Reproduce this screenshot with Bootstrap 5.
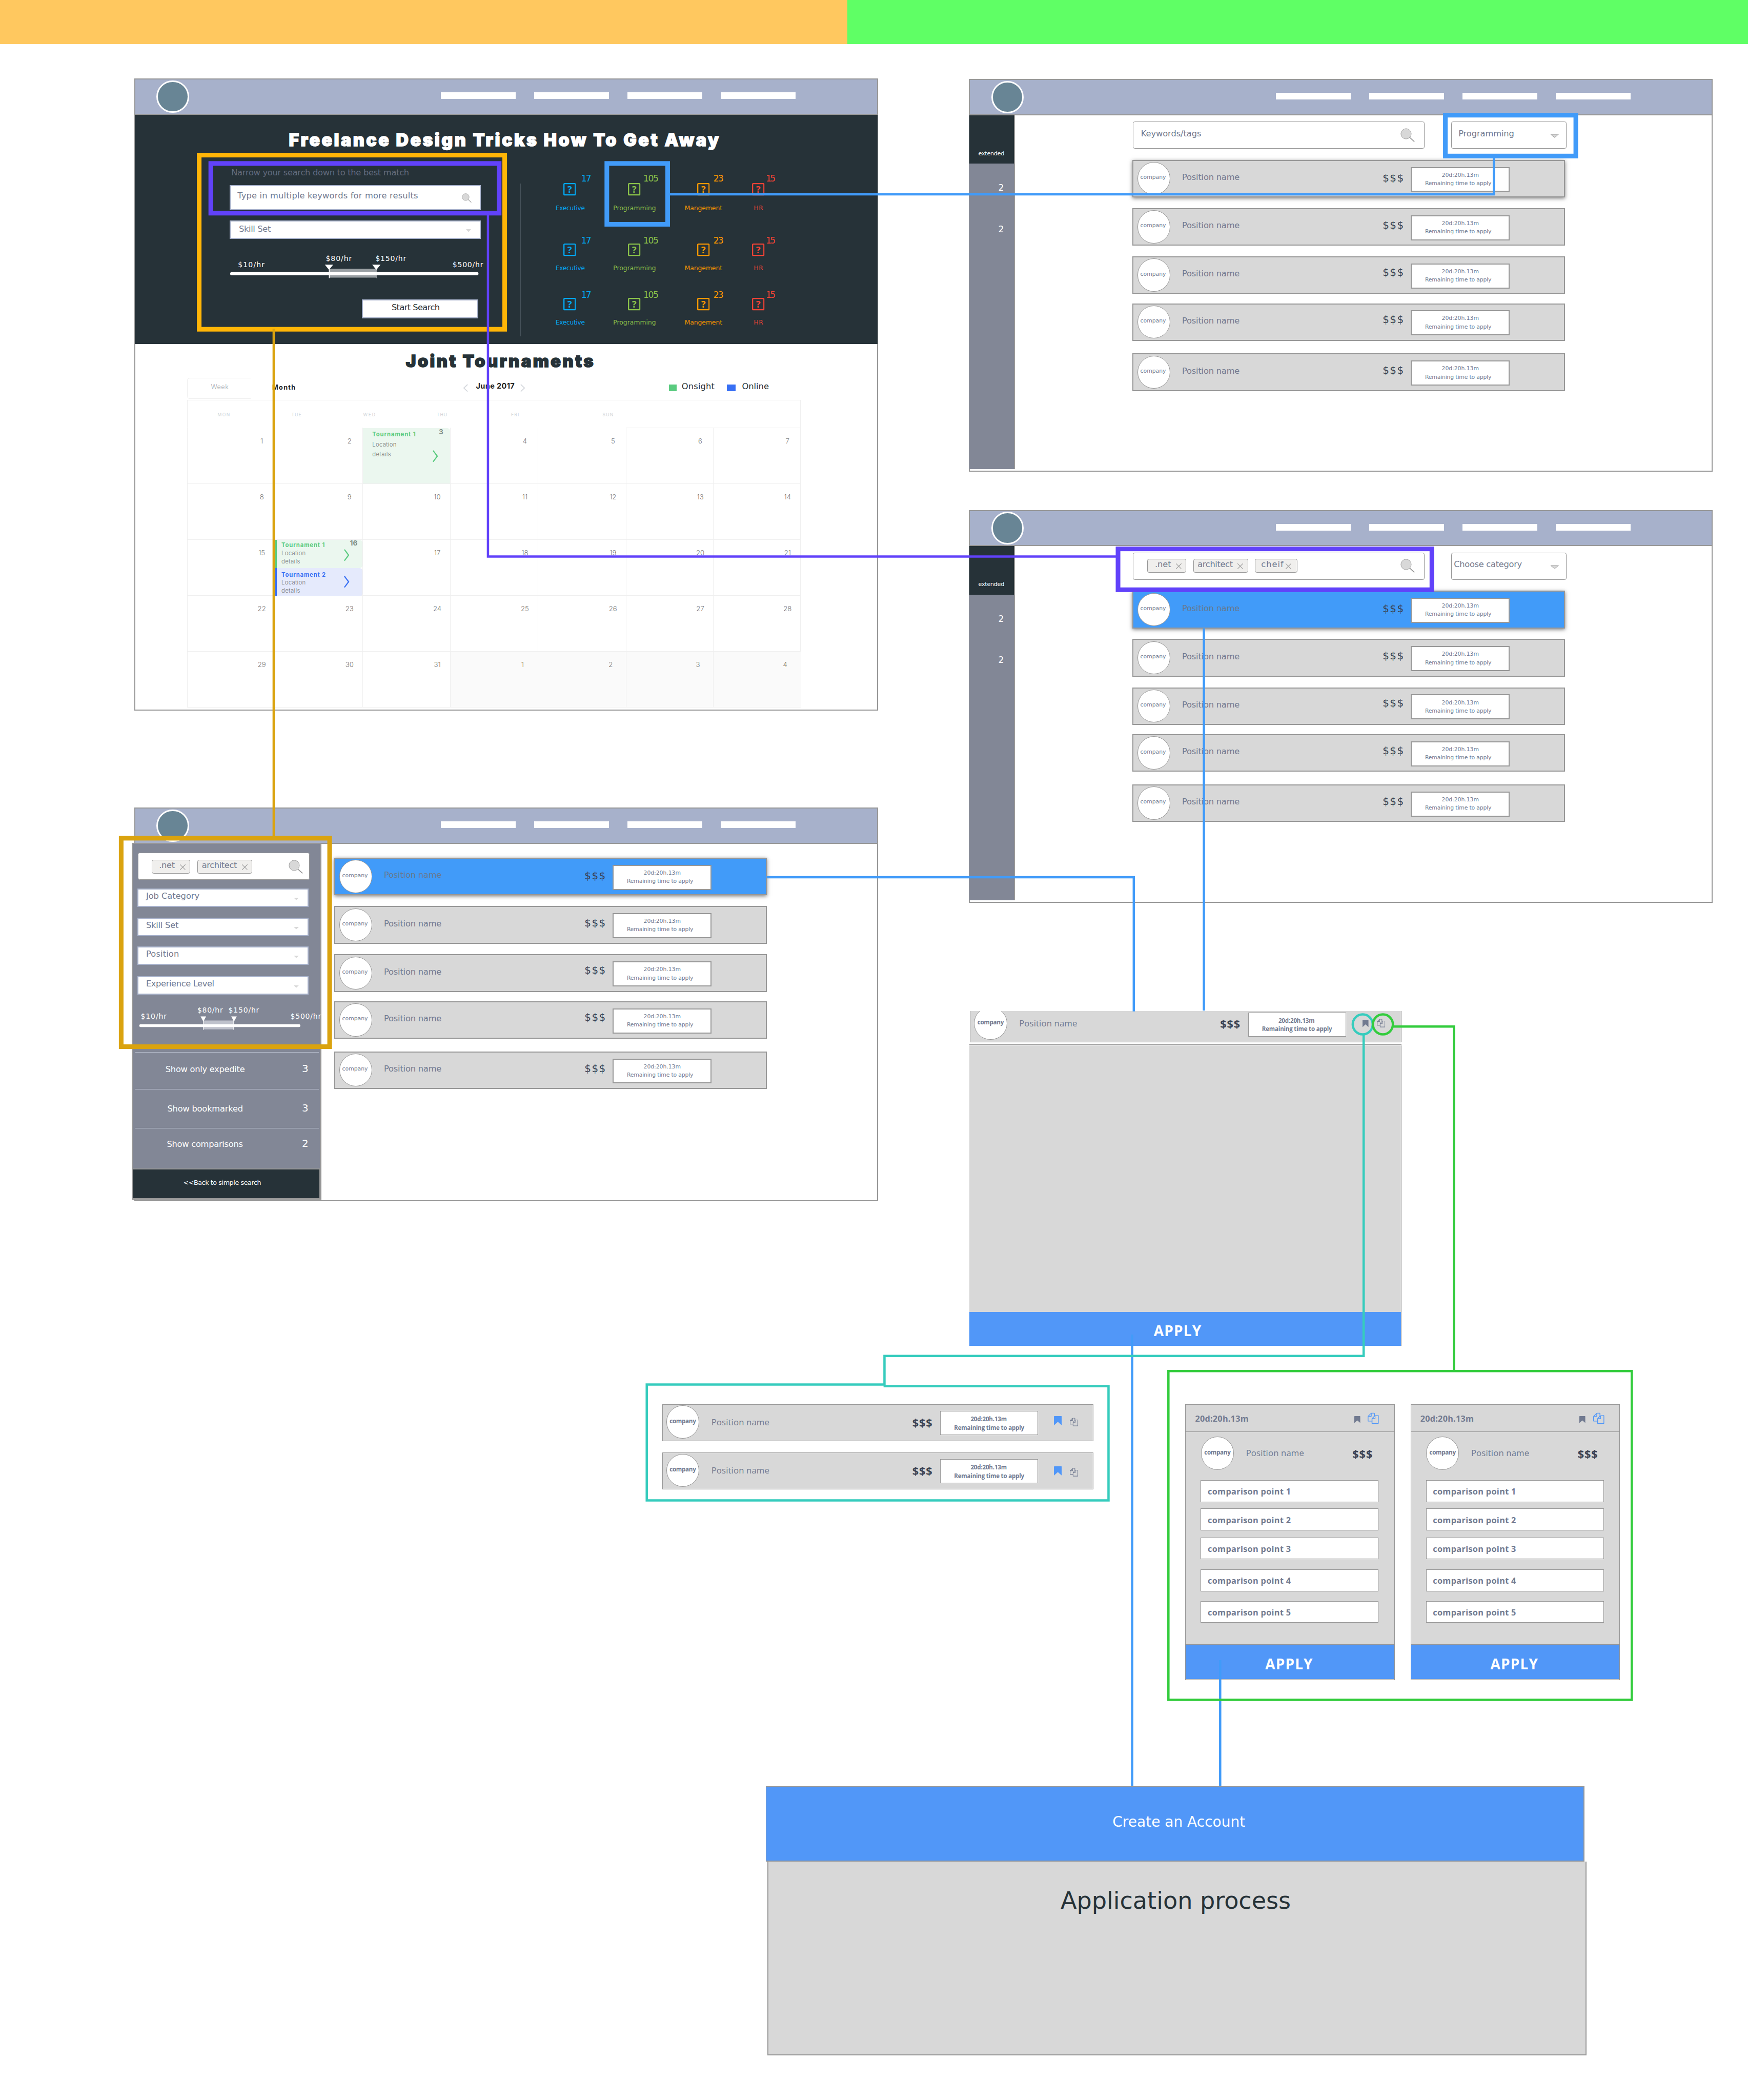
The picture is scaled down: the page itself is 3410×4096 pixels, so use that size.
<!DOCTYPE html>
<html lang="en">
<head>
<meta charset="utf-8">
<title>Job search flow</title>
<link href="https://cdn.jsdelivr.net/npm/bootstrap@5.3.0/dist/css/bootstrap.min.css" rel="stylesheet">
<style>
/* 1rem = 10 board units */
html{font-size:9.0575px}
body{margin:0;background:#fff;font-family:"DejaVu Sans",sans-serif;font-size:1.8rem;line-height:1;color:#717a90}
.board{position:relative;width:376.5rem;height:452.2rem;overflow:hidden}
.node{position:absolute}
.wires{position:absolute;inset:0;width:100%;height:100%;fill:none;pointer-events:none}
.tx{display:inline-block;white-space:nowrap;line-height:1;flex:none;transform:translateY(.13rem)}
.headline,.cal .tx,.os .tx,.cat .tx{transform:none}
svg{display:block;flex:none;overflow:visible}
.strip{height:9.5rem}
.strip-a{width:182.5rem;background:#ffc85f}.strip-b{background:#5fff65}
/* window frame */
.frame{width:160.2rem;border:.23rem solid #979797;background:#fff}
.bar{height:7.6rem;background:#a7b1cb;border-bottom:.23rem solid #979797;padding:.2rem 17.5rem 0 4.6rem}
.logo{width:7rem;height:7rem;border:.34rem solid #fff;border-radius:50%;background:#688595}
.menu{gap:4rem;margin-top:2.6rem}
.menu i{width:16.1rem;height:1.4rem;background:#fff}
/* landing */
.hero{background:#263238;height:49.4rem;margin:0 -.1rem;padding-left:.1rem}
.headline{font:900 3.75rem/1 Inter,sans-serif;color:#fff;-webkit-text-stroke:.17rem currentColor}
.hero .headline{margin:3.5rem 0 0 33.1rem;display:block}
.hero-top{height:8.2rem}
.search-form{width:62.6rem;padding-left:20.3rem;flex:none}
.field{background:#fff;border:.23rem solid #a7b1cb;width:54.1rem}
.hint{color:#636b7d;margin:3.28rem 0 1.82rem .4rem}
.dark-tx{color:#263238}
.rule-v{width:.15rem;height:32.9rem;background:#46525a;margin:6.6rem 0 0 20.3rem}
.cats{margin:5rem 0 0 7.5rem}
.cat{height:7.7rem}
.cat-icon{width:2.7rem;height:2.7rem;margin-top:1.5rem}
.cat-n{font-size:1.9rem}.cat-l{font-size:1.35rem;margin-top:2rem}
.cats>div:nth-child(1) .cat-n{margin-top:-.4rem}
.cats>div:nth-child(2){margin-top:5.3rem}.cats>div:nth-child(3){margin-top:4rem}
.c0{width:12.4rem;color:#03a9f4}.c1{width:15.4rem;color:#8bc34a}.c2{width:14.5rem;color:#ff9800}.c3{width:8rem;color:#f44336}
.c0 .cat-icon{margin-left:1.7rem;margin-right:1.1rem}.c1 .cat-icon{margin-left:3.2rem;margin-right:.6rem}
.c2 .cat-icon{margin-left:2.7rem;margin-right:.8rem}.c3 .cat-icon{margin-right:.3rem}.c3 .cat-l{margin-left:.4rem}
/* calendar */
.cal-title{color:#263238;margin:1.85rem 0 1.7rem 58.3rem;font-size:3.65rem}
.cal{width:132.1rem;margin-left:11.2rem;font-family:Inter,sans-serif;color:#949494}
.cal-bar{height:4.8rem}
.week-btn{width:13.7rem;height:4.6rem;border:.15rem solid #efefef;border-right:0;border-radius:.6rem 0 0 .6rem;padding:1.25rem 0 0 5rem;font-size:1.4rem;color:#a6adb4;font-weight:300}
.cal-days{height:6rem;border:.15rem solid #efefef;border-bottom:0;font-size:.95rem;color:#ced3d8;padding-top:2.7rem}
.cal-grid{display:grid;grid-template-columns:18.86rem 18.9rem 18.9rem 18.87rem 18.98rem 18.8rem 18.79rem;grid-auto-rows:12.02rem;border-right:.15rem solid #efefef;border-bottom:.15rem solid #efefef}
.day{border-left:.15rem solid #efefef;border-top:.15rem solid #efefef;font-size:1.45rem}
.day.top{border-top-color:transparent}.day.out{background:#fafafa}
.day-n{width:5.6rem;margin:2.1rem 0 0 auto;text-align:center;font-weight:300;color:#777}
.day.out .day-n{margin-right:.5rem}
.ev{font-size:1.25rem;position:relative}
.ev-g{background:#ebf7ef}.ev-b{background:#e5eafc}
.ev-s{height:6.08rem;border-left:.4rem solid #5acb7f;padding:.6rem 0 0 1rem;border-radius:0 .6rem .6rem 0}
.ev-s.ev-b{border-color:#376ff4;padding-top:.9rem}
.ev-l{height:100%;padding:.75rem 0 0 2rem;border-radius:0 .6rem 0 0}
.ev .tx{display:block;font-weight:300;color:#777}
.ev-num{position:absolute;font-size:1.5rem;font-weight:700;color:#7f8f87}
.ev-chev{position:absolute}
/* result sheets */
.side{width:9.8rem;height:76.2rem;margin-left:-.1rem;background:#828796;border-right:.23rem solid #979797;color:#fff}
.side-top{height:10.4rem;background:#263238;padding:7.5rem 0 0 1.9rem;font-size:1.25rem}
.side-n{font-size:1.9rem;padding-left:6.2rem}
.inp{height:5.8rem;border:.15rem solid #979797;border-radius:.4rem;background:#fff}
.tagx{height:2.9rem;background:#f0efed;border:.13rem solid #979797;border-radius:.4rem}
.jobs{width:93.1rem}
.job{height:8.1rem;border:.23rem solid #979797;background:#d8d8d8;margin-bottom:2.3rem}
.job:nth-child(3){margin-bottom:2rem}.job:nth-child(4){margin-bottom:2.7rem}
.job:first-child{box-shadow:0 .2rem .8rem rgba(0,0,0,.5)}
.job.hot{background:#419bf9}
.job.hot .job-name{color:#67798f}
.dot{width:7.1rem;height:7.1rem;border:.12rem solid #979797;border-radius:50%;background:#fff;flex:none}
.job .dot{margin:.26rem 0 0 .86rem;padding:2.55rem 0 0 .5rem;font-size:1.2rem}
.job-name{margin:2.58rem 0 0 2.5rem}
.job-pay{font-size:2.2rem;color:#3b4252;margin:2.3rem 1.5rem 0 auto}
.job:nth-child(1) .job-pay{margin-top:2.55rem}.job:nth-child(3) .job-pay{margin-top:2.05rem}.job:nth-child(4) .job-pay{margin-top:2.15rem}
.job-time{width:21.3rem;height:5.4rem;background:#fff;border:.23rem solid #979797;margin:1.3rem 11.7rem 0 0;font-size:1.2rem;padding:.9rem 0 0 2.9rem}
.job-time .tx{display:block}
.job-time .tx:first-child{margin:0 0 .6rem 3.6rem}
/* advanced filter */
.filter{width:40.8rem;height:76.8rem;margin:-.2rem 0 0 -.7rem;background:#828796;border:.23rem solid #979797;border-right-width:.34rem;color:#fff;flex:none}
.filter .field{width:36.8rem;height:4rem;margin-left:1rem;color:#717a90;padding:.42rem 0 0 1.6rem}
.flist{width:39.5rem;margin:3.5rem 0 0 .5rem}
.flist>div{border-top:.15rem solid #b9bfcf}
.back{margin:0 -.1rem 0 -.3rem;height:6.7rem;background:#263238;border:.23rem solid #979797;font-size:1.4rem;padding:2.15rem 0 0 10.9rem}
/* offers */
.os{font-family:"Open Sans",sans-serif}
.offer{width:92.9rem;height:7.9rem;border:.13rem solid #979797;background:#d8d8d8}
.dot-b{font:700 1.3rem/1 "Open Sans",sans-serif;padding:2.6rem 0 0 .6rem}
.offer .dot{margin:.15rem 0 0 .8rem}
.offer-name{font-size:1.85rem;font-weight:400;margin:2.85rem 0 0 2.6rem}
.offer-pay{font-weight:700;font-size:2.4rem;color:#3b4252;margin:2.6rem 1.7rem 0 auto}
.offer-time{width:21.1rem;height:5.2rem;background:#fff;border:.13rem solid #979797;margin-top:1.35rem;font-weight:700;font-size:1.28rem;padding:1rem 0 0 2.9rem}
.offer-time .tx{display:block}.offer-time .tx:first-child{margin:0 0 .55rem 3.55rem}
.offer-act{width:11.8rem}
.clip{height:6.75rem;overflow:hidden;margin-left:.1rem}.clip>.offer{margin-top:-1.15rem}
.apply{background:#5197f8;color:#fff;font:700 3.1rem/1 "Open Sans",sans-serif}
.panel{height:57.4rem;background:#d8d8d8;border-right:.13rem solid #979797}
.cmp{width:45.1rem;height:59.4rem;border:.15rem solid #979797;background:#d8d8d8;font-weight:700}
.cmp-head{height:5.9rem;border-bottom:.15rem solid #979797;padding-left:2rem}
.pt{width:38.3rem;height:4.7rem;background:#fff;border:.13rem solid #979797;margin-left:3.2rem;padding:1.45rem 0 0 1.4rem}
.proc-head{height:16.3rem;background:#5197f8;border:.23rem solid #979797;border-left-width:.12rem;color:#fff;width:176.3rem}
.proc-body{height:41.7rem;width:176.4rem;margin-left:.3rem;background:#d8d8d8;border:.23rem solid #979797;border-top:0;color:#263238}
</style>
<script src="https://cdn.jsdelivr.net/npm/bootstrap@5.3.0/dist/js/bootstrap.bundle.min.js"></script>
</head>
<body>
<svg width="0" height="0" class="position-absolute">
  <symbol id="copy" viewBox="0 0 1792 1792"><path fill="currentColor" d="M1696 384q40 0 68 28t28 68v1216q0 40-28 68t-68 28H736q-40 0-68-28t-28-68v-288H96q-40 0-68-28t-28-68V672q0-40 20-88t48-76L476 100q28-28 76-48t88-20h416q40 0 68 28t28 68v328q68-40 128-40h416zm-544 213L853 896h299V597zM512 213L213 512h299V213zm196 647l316-316V128H640v416q0 40-28 68t-68 28H128v640h512v-256q0-40 20-88t48-76zm956 804V512h-416v416q0 40-28 68t-68 28H768v640h896z"/></symbol>
  <symbol id="mark-i" viewBox="0 0 13 16" preserveAspectRatio="none"><path fill="currentColor" d="M1 0h11q1 0 1 1v15l-6.500-6L0 16V1q0-1 1-1z"/></symbol>
  <symbol id="glass" viewBox="0 0 32 32"><path d="M20 20L31 30" stroke="#979797" stroke-width="2" fill="none"/><circle cx="12.500" cy="12.500" r="11.500" fill="#d8d8d8" stroke="#979797"/></symbol>
  <symbol id="ask" viewBox="0 0 27 27"><rect x="1.300" y="1.300" width="24.400" height="24.400" rx="1.500" fill="none" stroke="currentColor" stroke-width="2.600"/><text x="13.500" y="20.800" text-anchor="middle" font-family="Open Sans, sans-serif" font-weight="700" font-size="20" fill="currentColor">?</text></symbol>
  <symbol id="ex" viewBox="0 0 12 12"><path d="M0 0L12 12M12 0L0 12" stroke="#979797" stroke-width="1.200"/></symbol>
</svg>

<main class="board">
  <div class="d-flex"><div class="strip strip-a"></div><div class="strip strip-b flex-grow-1"></div></div>

  <!-- Landing page -->
  <section class="node frame" style="left:28.9rem;top:16.9rem;height:136.1rem">
    <header class="bar d-flex justify-content-between"></header>
    <div class="hero">
      <div class="hero-top d-flex"><h1 class="tx headline" data-w="926">Freelance Design Tricks How To Get Away</h1></div>
      <div class="d-flex">
        <div class="search-form d-flex flex-column align-items-start">
          <label class="tx hint" data-w="383">Narrow your search down to the best match</label>
          <div class="field d-flex" style="height:5.4rem">
            <span class="tx" style="margin:1.18rem 0 0 1.5rem" data-w="389">Type in multiple keywords for more results</span>
            <svg class="ms-auto" style="width:2.1rem;height:2.1rem;margin:1.6rem 1.7rem 0 0"><use href="#glass"/></svg>
          </div>
          <div class="field d-flex" style="height:3.9rem;margin-top:2.3rem">
            <span class="tx" style="margin:.58rem 0 0 1.8rem" data-w="69">Skill Set</span>
            <svg class="ms-auto" style="width:1.1rem;height:.6rem;margin:1.6rem 1.8rem 0 0" viewBox="0 0 11 6"><path d="M0 0H11L5.500 6Z" fill="#d8d8d8"/></svg>
          </div>
          <svg style="width:56rem;height:7rem;margin-top:2.6rem" viewBox="494 540 560 70" font-size="15.500" fill="#fff">
            <text x="512" y="575" textLength="57">$10/hr</text><text x="701" y="562" textLength="56">$80/hr</text>
            <text x="808" y="562" textLength="66">$150/hr</text><text x="974" y="575" textLength="66">$500/hr</text>
            <path d="M708 579H810V598H708Z" fill="#9aa0a4"/><rect x="495" y="586" width="535" height="7" rx="3.500"/>
            <path d="M699 570H717L708 581ZM801 570H819L810 581Z"/><path d="M708.500 575V599M809.500 575V599" stroke="#fff" stroke-width="1.500"/>
          </svg>
          <div class="field d-flex dark-tx" style="width:25.1rem;height:4rem;margin:3.5rem 0 0 28.5rem"><span class="tx" style="margin:.48rem 0 0 6.2rem" data-w="104">Start Search</span></div>
        </div>
        <div class="rule-v"></div>
        <div class="cats" id="cats"></div>
      </div>
    </div>
    <h2 class="tx headline cal-title" data-w="404">Joint Tournaments</h2>
    <div class="cal">
      <div class="cal-bar d-flex">
        <div class="week-btn"><span class="tx" data-w="38">Week</span></div>
        <span class="tx" style="font-size:1.4rem;font-weight:700;color:#1c1c1c;margin:1.5rem 0 0 4.6rem" data-w="50">Month</span>
        <svg style="width:1rem;height:1.5rem;margin:1.5rem 0 0 36.2rem" viewBox="0 0 10 15"><path d="M9 0L1 7.500L9 15" fill="none" stroke="#d5d8dd" stroke-width="2"/></svg>
        <span class="tx" style="font-size:1.6rem;font-weight:700;color:#1c1c1c;margin:1.1rem 0 0 1.7rem" data-w="83">June 2017</span>
        <svg style="width:1rem;height:1.5rem;margin:1.5rem 0 0 1.2rem" viewBox="0 0 10 15"><path d="M1 0L9 7.500L1 15" fill="none" stroke="#d5d8dd" stroke-width="2"/></svg>
        <div style="width:1.6rem;height:1.4rem;background:#5acb7f;margin:1.5rem 0 0 31.1rem"></div>
        <span class="tx dark-tx" style="font-family:'DejaVu Sans';margin:1.08rem 0 0 1.1rem;font-size:1.8rem" data-w="71">Onsight</span>
        <div style="width:1.8rem;height:1.4rem;background:#376ff4;margin:1.5rem 0 0 2.7rem"></div>
        <span class="tx dark-tx" style="font-family:'DejaVu Sans';margin:1.08rem 0 0 1.4rem;font-size:1.8rem" data-w="58">Online</span>
      </div>
      <div class="cal-days d-flex" id="days"></div>
      <div class="cal-grid" id="grid"></div>
    </div>
  </section>

  <!-- Simple search, by category -->
  <section class="node frame" style="left:208.7rem;top:17rem;height:84.6rem">
    <header class="bar d-flex justify-content-between"></header>
    <div class="d-flex">
      <aside class="side"></aside>
      <div style="margin:1.4rem 0 0 25.3rem">
        <div class="d-flex" style="margin-left:.1rem">
          <div class="inp d-flex" style="width:62.8rem"><span class="tx" style="margin:1.45rem 0 0 1.6rem" data-w="130">Keywords/tags</span>
            <svg class="ms-auto" style="width:3.1rem;height:3.1rem;margin:1.25rem 2rem 0 0"><use href="#glass"/></svg></div>
          <div class="inp d-flex" style="width:24.9rem;margin-left:5.7rem"><span class="tx" style="margin:1.45rem 0 0 1.5rem" data-w="120">Programming</span>
            <svg class="ms-auto" style="width:1.7rem;height:.7rem;margin:2.6rem 1.6rem 0 0" viewBox="0 0 17 7"><path d="M0 0H17L8.500 7Z" fill="#d8d8d8" stroke="#979797"/></svg></div>
        </div>
        <div class="jobs" style="margin-top:2.4rem"></div>
      </div>
    </div>
  </section>

  <!-- Simple search, by keywords -->
  <section class="node frame" style="left:208.7rem;top:109.8rem;height:84.6rem">
    <header class="bar d-flex justify-content-between"></header>
    <div class="d-flex">
      <aside class="side"></aside>
      <div style="margin:1.4rem 0 0 25.3rem">
        <div class="d-flex" style="margin-left:.1rem">
          <div class="inp d-flex" style="width:62.8rem">
            <div class="tagx d-flex" style="width:8.3rem;margin:1.25rem 0 0 3rem"><span class="tx" style="margin:.1rem 0 0 1.5rem" data-w="35">.net</span><svg style="width:1.2rem;height:1.2rem;margin:.9rem 0 0 1rem"><use href="#ex"/></svg></div>
            <div class="tagx d-flex" style="width:11.8rem;margin:1.25rem 0 0 1.6rem"><span class="tx" style="margin:.1rem 0 0 .8rem" data-w="76">architect</span><svg style="width:1.2rem;height:1.2rem;margin:.9rem 0 0 1rem"><use href="#ex"/></svg></div>
            <div class="tagx d-flex" style="width:9.1rem;margin:1.25rem 0 0 1.5rem"><span class="tx" style="margin:.1rem 0 0 1.2rem" data-w="48">cheif</span><svg style="width:1.2rem;height:1.2rem;margin:.9rem 0 0 .5rem"><use href="#ex"/></svg></div>
            <svg class="ms-auto" style="width:3.1rem;height:3.1rem;margin:1.25rem 2rem 0 0"><use href="#glass"/></svg></div>
          <div class="inp d-flex" style="width:24.9rem;margin-left:5.7rem"><span class="tx" style="margin:1.45rem 0 0 .5rem" data-w="147">Choose category</span>
            <svg class="ms-auto" style="width:1.7rem;height:.7rem;margin:2.6rem 1.6rem 0 0" viewBox="0 0 17 7"><path d="M0 0H17L8.500 7Z" fill="#d8d8d8" stroke="#979797"/></svg></div>
        </div>
        <div class="jobs" data-hot="1" style="margin-top:2.4rem"></div>
      </div>
    </div>
  </section>

  <!-- Advanced search -->
  <section class="node frame" style="left:28.9rem;top:173.9rem;height:84.8rem">
    <header class="bar d-flex justify-content-between"></header>
    <div class="d-flex">
      <aside class="filter">
        <div class="inp d-flex" style="width:36.9rem;margin:1.9rem 0 0 1.1rem;color:#717a90">
          <div class="tagx d-flex" style="width:8.3rem;margin:1.45rem 0 0 2.8rem"><span class="tx" style="margin:.1rem 0 0 1.5rem" data-w="34">.net</span><svg style="width:1.2rem;height:1.2rem;margin:.8rem 0 0 1.1rem"><use href="#ex"/></svg></div>
          <div class="tagx d-flex" style="width:11.8rem;margin:1.45rem 0 0 1.6rem"><span class="tx" style="margin:.1rem 0 0 .8rem" data-w="76">architect</span><svg style="width:1.2rem;height:1.2rem;margin:.8rem 0 0 1.1rem"><use href="#ex"/></svg></div>
          <svg class="ms-auto" style="width:3.1rem;height:3.1rem;margin:1.35rem 1.3rem 0 0"><use href="#glass"/></svg>
        </div>
        <div id="selects"></div>
        <svg style="width:41rem;height:8rem;margin-top:.8rem" viewBox="286 2150 410 80" font-size="15.500" fill="#fff">
          <text x="303" y="2193" textLength="56">$10/hr</text><text x="425" y="2180" textLength="55">$80/hr</text>
          <text x="492" y="2180" textLength="66">$150/hr</text><text x="625.500" y="2193" textLength="66">$500/hr</text>
          <path d="M438 2197H504V2216H438Z" fill="#bfc2cc"/><rect x="300" y="2205" width="347" height="6" rx="3"/>
          <path d="M432 2188H444L438 2199ZM498 2188H510L504 2199Z"/><path d="M438.500 2192V2217M503.500 2192V2217" stroke="#fff" stroke-width="1.300"/>
        </svg>
        <div class="flist">
          <div class="d-flex align-items-baseline" style="height:8rem;padding-top:2.3rem"><span class="tx" style="margin-left:6.5rem" data-w="171">Show only expedite</span><span class="tx ms-auto" style="font-size:2.2rem;margin-right:2.2rem">3</span></div>
          <div class="d-flex align-items-baseline" style="height:8.35rem;padding-top:2.8rem"><span class="tx" style="margin-left:6.9rem" data-w="163">Show bookmarked</span><span class="tx ms-auto" style="font-size:2.2rem;margin-right:2.2rem">3</span></div>
          <div class="d-flex align-items-baseline" style="height:8.7rem;padding-top:2.1rem"><span class="tx" style="margin-left:6.8rem" data-w="164">Show comparisons</span><span class="tx ms-auto" style="font-size:2.2rem;margin-right:2.2rem">2</span></div>
        </div>
        <div class="back"><span class="tx" data-w="168">&lt;&lt;Back to simple search</span></div>
      </aside>
      <div class="jobs" data-hot="1" style="margin:3rem 0 0 2.8rem"></div>
    </div>
  </section>

  <!-- Position details -->
  <section class="node os" style="left:208.8rem;top:217.7rem;width:93rem">
    <div class="clip" id="detail"></div>
    <div style="height:.2rem;background:#979797;margin:.4rem 0 .1rem"></div>
    <div class="panel"></div>
    <div class="apply" style="height:7.3rem;padding:2.4rem 0 0 39.7rem;border-right:.13rem solid #979797"><span class="tx" data-w="102">APPLY</span></div>
  </section>

  <!-- Bookmarked -->
  <section class="node os d-flex flex-column" style="left:142.6rem;top:302.4rem;gap:2.5rem" id="marked"></section>

  <!-- Comparison -->
  <section class="node os d-flex" style="left:255.3rem;top:302.4rem;gap:3.4rem" id="compare"></section>

  <!-- Application process -->
  <section class="node" style="left:165rem;top:384.6rem">
    <div class="proc-head"><span class="tx" style="font-size:3.1rem;margin:5.9rem 0 0 74.5rem" data-w="286">Create an Account</span></div>
    <div class="proc-body"><span class="tx" style="font-size:5.1rem;margin:5.7rem 0 0 62.900rem" data-w="496">Application process</span></div>
  </section>

  <!-- Highlights and flow lines -->
  <svg class="wires" viewBox="0 0 3765 4522" preserveAspectRatio="none">
    <g stroke-width="10">
      <rect x="429" y="334" width="658" height="375" stroke="#ffb507"/>
      <rect x="454" y="352" width="621" height="107" stroke="#6142fa"/>
      <rect x="1307" y="352" width="131" height="131" stroke="#419bf9"/>
      <rect x="3113" y="248" width="281" height="88" stroke="#419bf9"/>
      <rect x="2408" y="1182" width="676" height="88" stroke="#6142fa"/>
      <rect x="261" y="1805" width="449" height="449" stroke="#daa30f"/>
    </g>
    <g stroke-width="5">
      <path d="M589.500 708V1803" stroke="#daa30f"/>
      <path d="M1051 462V1198.500H2405" stroke="#6142fa"/>
      <g stroke="#419bf9">
        <path d="M1441 418.500H3217.500V339"/><path d="M2593 1353V2176"/><path d="M1651 1889H2442V2178"/>
        <path d="M2438.500 2874V3846"/><path d="M2628 3575V3846"/>
      </g>
      <g stroke="#36ccbd"><circle cx="2935" cy="2206" r="21.500"/><path d="M2937 2228V2920H1905V2981.500H1393V3231H2387.500V2985H1903"/></g>
      <g stroke="#33cc3d"><circle cx="2978.500" cy="2206" r="21.500"/><path d="M3001 2210.500H3131.500V2952"/><rect x="2516.500" y="2952.500" width="998" height="708"/></g>
    </g>
  </svg>
</main>

<script>
const $ = s => document.querySelector(s), all = s => [...document.querySelectorAll(s)];
const t = (w, s, c = '') => `<span class="tx ${c}" data-w="${w}">${s}</span>`;
const icon = (id, w, h, css) => `<svg style="width:${w}rem;height:${h}rem;${css}"><use href="#${id}"/></svg>`;

all('.bar').forEach(b => b.innerHTML = '<div class="logo"></div><div class="menu d-flex"><i></i><i></i><i></i><i></i></div>');

const cats = [['17', 22, 'Executive', 63], ['105', 33, 'Programming', 92], ['23', 22, 'Mangement', 81], ['15', 21, 'HR', 20]];
$('#cats').innerHTML = [0, 1, 2].map(() => '<div class="d-flex">' + cats.map((c, i) =>
  `<div class="cat c${i}"><div class="d-flex"><svg class="cat-icon"><use href="#ask"/></svg>${t(c[1], c[0], 'cat-n')}</div>${t(c[3], c[2], 'cat-l')}</div>`).join('') + '</div>').join('');

/* weekday labels: text, width, gap before it */
$('#days').innerHTML = [['MON', 26, 6.45], ['TUE', 21, 13.3], ['WED', 26, 13.35], ['THU', 22, 13.25], ['FRI', 17, 13.8], ['SUN', 23, 18]]
  .map(d => `<div style="margin-left:${d[2]}rem">${t(d[1], d[0])}</div>`).join('');

const chev = (c, x, y) => `<svg class="ev-chev" style="left:${x}rem;top:${y}rem;width:1.100rem;height:2.600rem" viewBox="0 0 11 26"><path d="M1 1L10 13L1 25" fill="none" stroke="${c}" stroke-width="2.500"/></svg>`;
let cells = '';
for (let i = 0; i < 35; i++) {
  const n = i < 31 ? i + 1 : i - 30;
  const cls = (i < 5 ? ' top' : '') + (i > 30 ? ' out' : '');
  let body = `<div class="day-n">${n}</div>`;
  if (n === 3 && i < 31) body = `<div class="ev ev-g ev-l"><b class="tx" data-w="93" style="font-weight:700;color:#5acb7f">Tournament 1</b>
    <span class="tx" data-w="52" style="margin-top:.95rem">Location</span><span class="tx" data-w="40" style="margin-top:.85rem">details</span>
    <span class="ev-num" style="right:1.5rem;top:.1rem">3</span>${chev('#5acb7f', 15, 4.7)}</div>`;
  if (n === 16) body = `<div class="ev ev-g ev-s"><b class="tx" data-w="93" style="font-weight:700;color:#5acb7f">Tournament 1</b>
    <span class="tx" data-w="52" style="margin-top:.5rem">Location</span><span class="tx" data-w="40" style="margin-top:.5rem">details</span>
    <span class="ev-num" style="right:1.1rem;top:0">16</span>${chev('#5acb7f', 14.500, 2)}</div>
    <div class="ev ev-b ev-s"><b class="tx" data-w="95" style="font-weight:700;color:#376ff4">Tournament 2</b>
    <span class="tx" data-w="52" style="margin-top:.42rem">Location</span><span class="tx" data-w="40" style="margin-top:.42rem">details</span>${chev('#376ff4', 14.500, 1.6)}</div>`;
  cells += `<div class="day${cls}">${body}</div>`;
}
$('#grid').innerHTML = cells;

all('.side').forEach(s => s.innerHTML = `<div class="side-top">${t(56, 'extended')}</div><div class="side-n" style="margin-top:4.250rem"><span class="tx">2</span></div><div class="side-n" style="margin-top:6.950rem"><span class="tx">2</span></div>`);

all('.jobs').forEach(list => list.innerHTML = [0, 1, 2, 3, 4].map(i =>
  `<article class="job d-flex align-items-start${i === 0 && list.dataset.hot ? ' hot' : ''}"><div class="dot">${t(55, 'company')}</div>${t(124, 'Position name', 'job-name')}${t(45, '$$$', 'job-pay')}
   <div class="job-time">${t(80, '20d:20h.13m')}${t(143, 'Remaining time to apply')}</div></article>`).join(''));

$('#selects').innerHTML = [['Job Category', 115, 1.9], ['Skill Set', 70, 2.3], ['Position', 71, 2.2], ['Experience Level', 147, 2.4]].map(s =>
  `<div class="field d-flex align-items-start" style="margin-top:${s[2]}rem">${t(s[1], s[0])}<svg class="ms-auto" style="width:1.100rem;height:.5rem;margin:1.300rem 1.900rem 0 0" viewBox="0 0 11 5"><path d="M0 0H11L5.500 5Z" fill="#d8d8d8"/></svg></div>`).join('');

const offer = acts => `<article class="offer d-flex align-items-start"><div class="dot dot-b">${t(57, 'company')}</div>${t(125, 'Position name', 'offer-name')}${t(43, '$$$', 'offer-pay')}
  <div class="offer-time">${t(78, '20d:20h.13m')}${t(151, 'Remaining time to apply')}</div><div class="offer-act d-flex align-items-start">${acts}</div></article>`;
$('#detail').innerHTML = offer(icon('mark-i', 1.3, 1.6, 'margin:2.900rem 0 0 3.600rem') + icon('copy', 1.8, 1.9, 'margin:2.700rem 0 0 1.800rem'));
$('#marked').innerHTML = [2.45, 2.85].map(y => offer(icon('mark-i', 1.7, 2, `margin:${y}rem 0 0 3.400rem;color:#5197f8`) + icon('copy', 1.8, 1.9, `margin:${y + .3}rem 0 0 1.700rem`))).join('');

$('#compare').innerHTML = [0, 1].map(() => `<article class="cmp">
  <div class="cmp-head d-flex align-items-start"><span class="tx" style="margin-top:2.050rem" data-w="115">20d:20h.13m</span>
    ${icon('mark-i', 1.3, 1.5, 'margin:2.400rem 1.600rem 0 auto')}${icon('copy', 2.4, 2.5, 'margin:1.650rem 3.300rem 0 0;color:#5197f8')}</div>
  <div class="d-flex align-items-start"><div class="dot dot-b" style="margin:1rem 0 0 3.250rem">${t(57, 'company')}</div><span class="tx offer-name" style="margin-top:3.650rem" data-w="125">Position name</span>
    <span class="tx offer-pay" style="margin:3.500rem 4.700rem 0 auto" data-w="43">$$$</span></div>
  ${[2.25, 1.4, 1.5, 2.2, 2.1].map((m, i) => `<div class="pt" style="margin-top:${m}rem">${t(179, 'comparison point ' + (i + 1))}</div>`).join('')}
  <div class="apply" style="border-top:.15rem solid #979797;height:7.500rem;margin-top:4.600rem;padding:2.550rem 0 0 17.100rem">${t(102, 'APPLY')}</div></article>`).join('');

/* spread each label over its width in board units */
const unit = parseFloat(getComputedStyle(document.documentElement).fontSize) / 10;
all('[data-w]').forEach(e => {
  const r = document.createRange(); r.selectNodeContents(e);
  const w = e.dataset.w * unit, gap = (w - r.getBoundingClientRect().width) / (e.textContent.length - 1 || 1);
  e.style.letterSpacing = gap.toFixed(3) + 'px';
  e.style.width = w.toFixed(2) + 'px';
});
</script>
</body>
</html>
